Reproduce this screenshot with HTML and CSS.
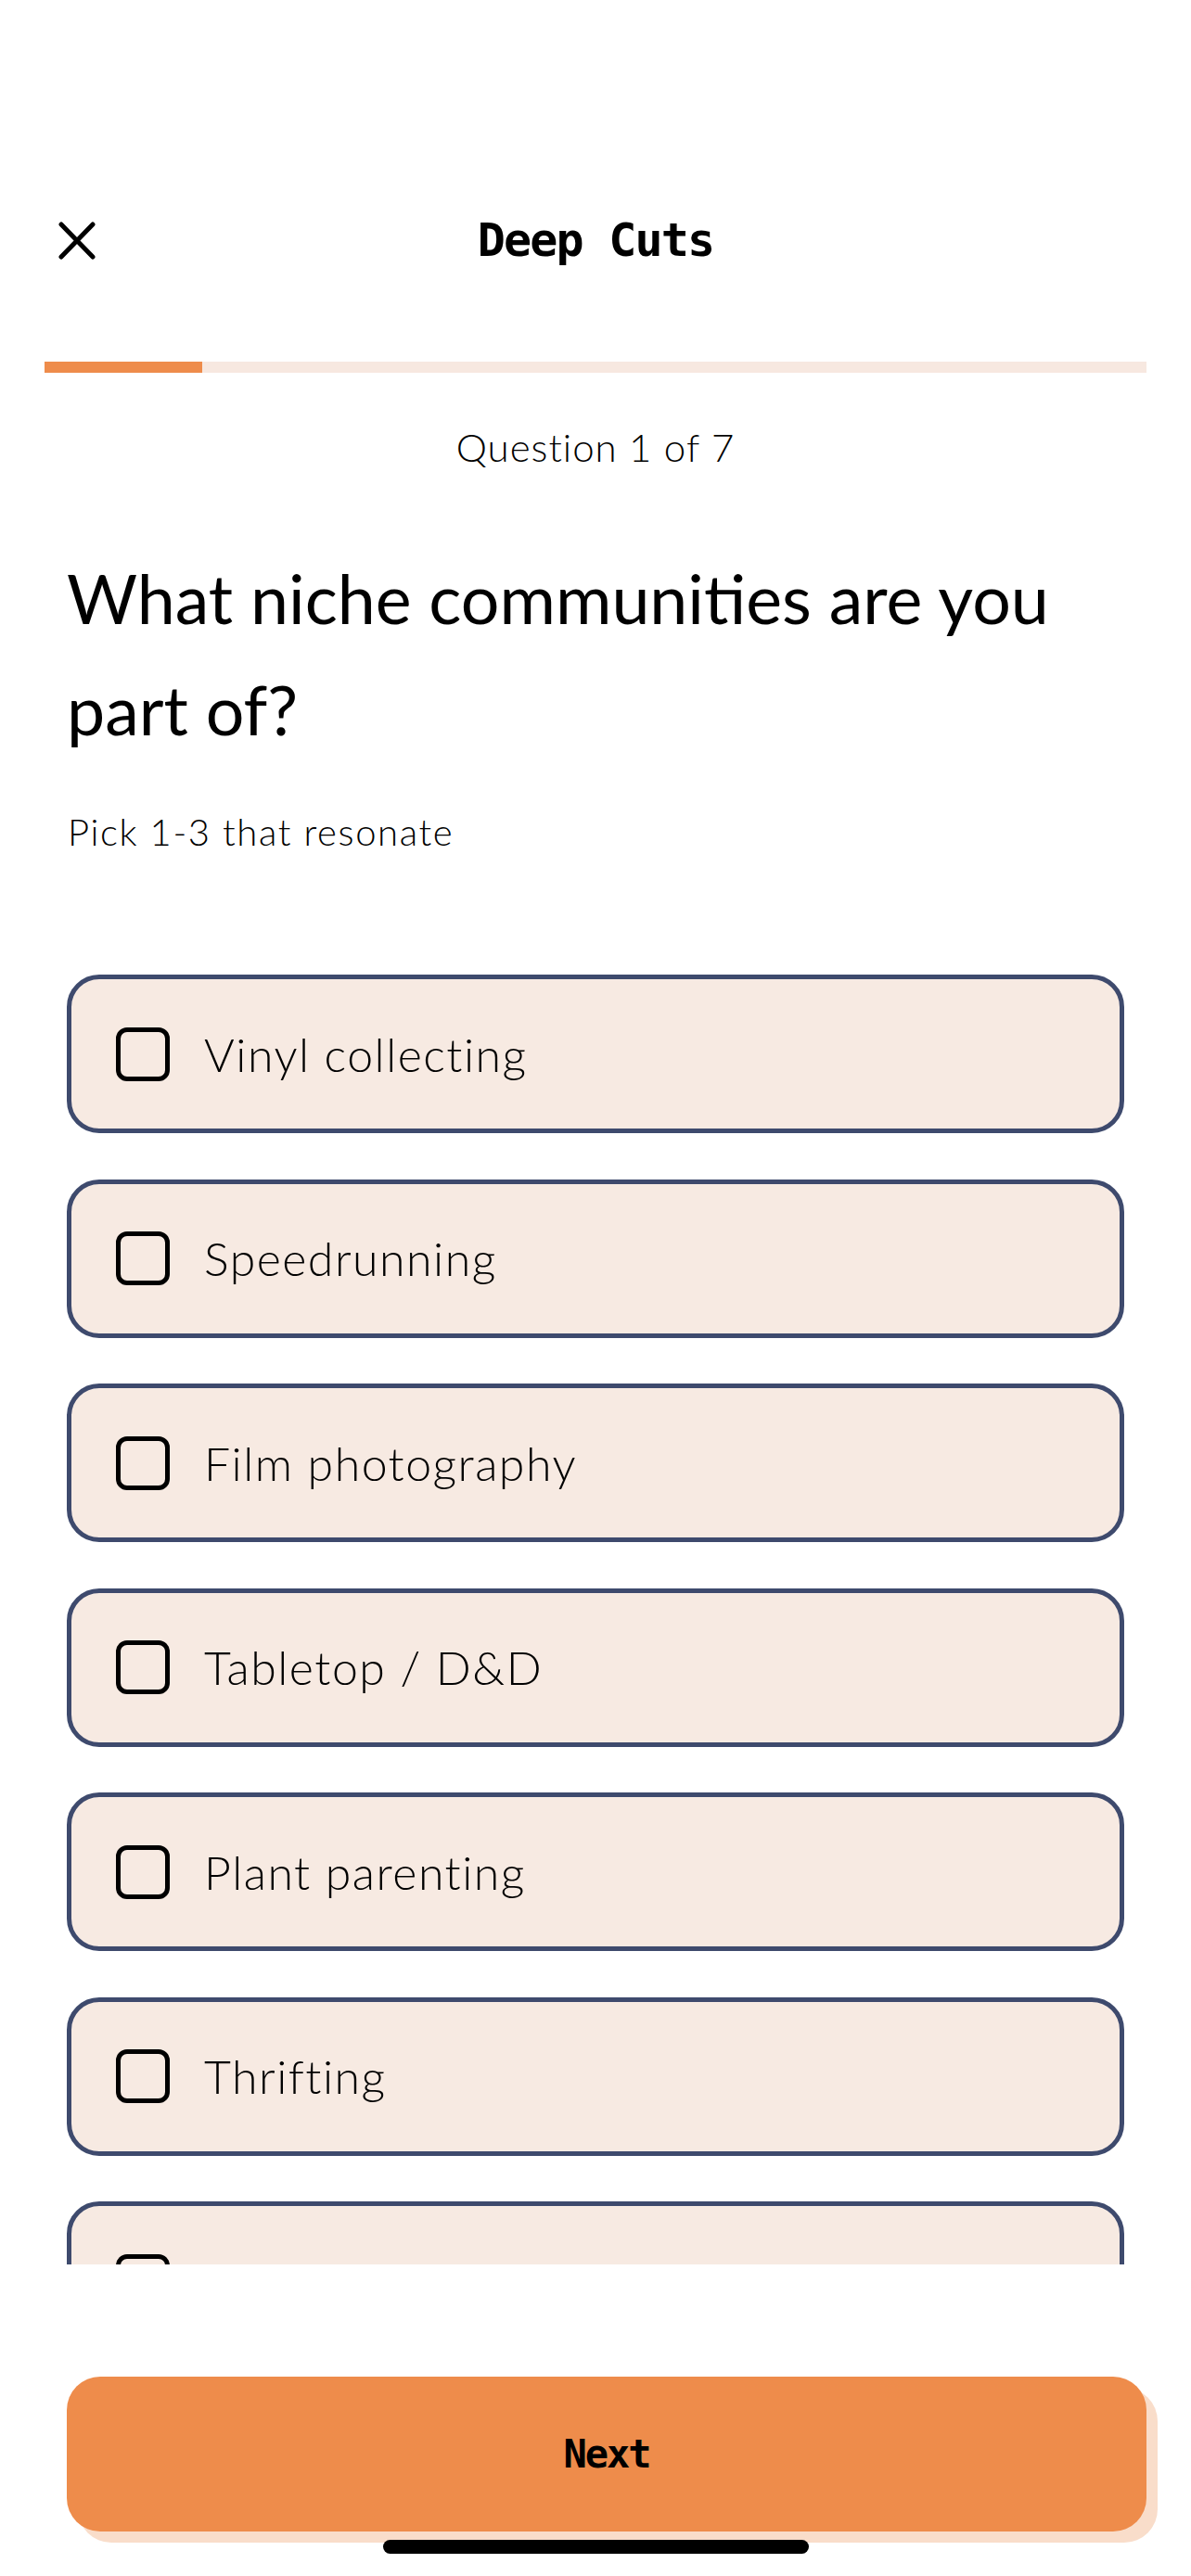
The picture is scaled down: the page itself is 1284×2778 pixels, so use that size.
FILE: index.html
```html
<!DOCTYPE html>
<html lang="en">
<head>
    <meta charset="UTF-8">
    <title>Deep Cuts</title>
    <link rel="stylesheet" href="styles.css">
</head>
<body>
<div class="screen">
    <div class="topbar">
        <a href="#" class="close">
            <svg width="40" height="41" viewBox="0 0 40 41"><path d="M3 3 L37 38 M37 3 L3 38" stroke="#000" stroke-width="5" stroke-linecap="round" fill="none"/></svg>
        </a>
        <h1 class="brand">Deep Cuts</h1>
        <span></span>
    </div>

    <div class="progress"><div class="progress-fill" style="width:14.28%"></div></div>

    <p class="step">Question 1 of 7</p>
    <h2 class="question">What niche communities are you part of?</h2>
    <p class="hint">Pick 1-3 that resonate</p>

    <ul class="options">
        <li class="option"><span class="box"></span><span class="label">Vinyl collecting</span></li>
        <li class="option"><span class="box"></span><span class="label">Speedrunning</span></li>
        <li class="option"><span class="box"></span><span class="label">Film photography</span></li>
        <li class="option"><span class="box"></span><span class="label">Tabletop / D&amp;D</span></li>
        <li class="option"><span class="box"></span><span class="label">Plant parenting</span></li>
        <li class="option"><span class="box"></span><span class="label">Thrifting</span></li>
        <li class="option"><span class="box"></span><span class="label">Cosplay</span></li>
    </ul>

    <div class="footer">
        <a href="#" class="next">Next</a>
    </div>
    <div class="home-bar"></div>
</div>
</body>
</html>
```

FILE: styles.css
```css
@charset "UTF-8";
/* reset */
body,h1,h2,p,ul,li{margin:0;padding:0}
ul{list-style:none}
a{text-decoration:none;color:inherit}
body{font-family:Lato,"Open Sans",sans-serif;color:#000;background:#fff}

.screen{
    width:1284px;
    height:2778px;
    position:relative;
    overflow:hidden;
}

/* top bar */
.topbar{
    margin-top:219px;
    height:80px;
    padding:0 63px;
    display:grid;
    grid-template-columns:1fr auto 1fr;
    align-items:center;
}
.close{display:flex;align-items:center}
.brand{
    font-family:"DejaVu Sans Mono",monospace;
    font-weight:bold;
    font-size:50px;
    letter-spacing:-1.8px;
    line-height:1;
}

.progress{
    margin:91px 48px 0;
    height:12px;
    background:#f7e8e0;
}
.progress-fill{
    height:100%;
    background:#ee8c4b;
}

.step{
    margin-top:52px;
    text-align:center;
    font-size:42px;
    font-weight:300;
    letter-spacing:1px;
    line-height:56px;
}
.question{
    margin-top:75px;
    padding:0 72px;
    font-size:73.5px;
    font-weight:400;
    line-height:120px;
}
.hint{
    margin-top:47px;
    padding:0 73px;
    font-size:40px;
    font-weight:300;
    letter-spacing:1.6px;
    line-height:50px;
}

/* options list */
.options{
    margin-top:129px;
    height:1391px;
    overflow:hidden;
    padding:0 72px;
    display:flex;
    flex-direction:column;
    gap:49.5px;
}
.option{
    flex:none;
    height:171px;
    box-sizing:border-box;
    border:5px solid #3e4a6d;
    border-radius:35px;
    background:#f7eae2;
    display:flex;
    align-items:center;
    padding-left:48px;
}
.box{
    width:58px;
    height:58px;
    box-sizing:border-box;
    border:5px solid #000;
    border-radius:12px;
    margin-right:37px;
}
.label{
    font-size:50px;
    font-weight:300;
    letter-spacing:1.5px;
}

/* footer */
.footer{
    padding:121px 48px 0 72px;
}
.next{
    display:flex;
    align-items:center;
    justify-content:center;
    height:167px;
    border-radius:36px;
    background:#ee8c4b;
    box-shadow:12px 12px 0 #f9ddca;
    font-family:"DejaVu Sans Mono",monospace;
    font-weight:bold;
    font-size:42px;
    letter-spacing:-2px;
}

.home-bar{
    position:absolute;
    left:413px;
    bottom:24px;
    width:459px;
    height:15px;
    border-radius:8px;
    background:#000;
}
```
